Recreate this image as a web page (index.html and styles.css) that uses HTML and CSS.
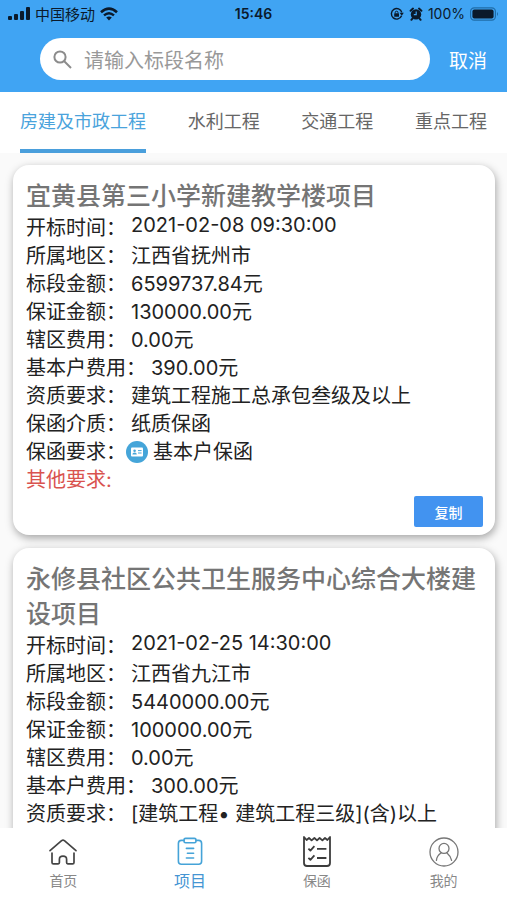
FILE: index.html
```html
<!DOCTYPE html>
<html lang="zh-CN">
<head>
    <meta charset="UTF-8">
    <title>项目</title>
    <meta name="viewport" content="width=device-width, initial-scale=1.0">
    <link rel="stylesheet" href="styles.css">
</head>
<body>
    <header class="header">
        <div class="status-bar">
            <div class="status-left">
                <svg width="22" height="14" viewBox="0 0 22 14">
                    <rect x="0" y="9" width="4" height="4" rx="1"/>
                    <rect x="6" y="7" width="4" height="6" rx="1"/>
                    <rect x="12" y="4" width="4" height="9" rx="1"/>
                    <rect x="18" y="0" width="4" height="13" rx="1"/>
                </svg>
                <span class="carrier">中国移动</span>
                <svg width="18" height="14" viewBox="0 0 18 14">
                    <path d="M1 5.2Q9-2 17 5.2" fill="none" stroke="currentColor" stroke-width="2.6"/>
                    <path d="M4 8.4Q9 4 14 8.4" fill="none" stroke="currentColor" stroke-width="2.4"/>
                    <path d="M6.2 10.6Q9 8.2 11.8 10.6L9 13.6z"/>
                </svg>
            </div>
            <span class="time">15:46</span>
            <div class="status-right">
                <svg width="14" height="14" viewBox="0 0 14 14">
                    <path d="M11.6 8.8A5.3 5.3 0 1 1 11.8 5.4" fill="none" stroke="currentColor" stroke-width="1.4"/>
                    <path d="M9.6 5.8h4.2l-2 3z"/>
                    <rect x="4.2" y="6.2" width="4.8" height="3.6" rx=".6"/>
                    <path d="M5.2 6.4V5.6a1.4 1.4 0 0 1 2.8 0v.8" fill="none" stroke="currentColor"/>
                </svg>
                <svg width="14" height="14" viewBox="0 0 14 14">
                    <circle cx="7" cy="7.4" r="5.2"/>
                    <path d="M1.6 3.8 4 1.6M12.4 3.8 10 1.6M3.6 11.4l-1.2 1.4M10.4 11.4l1.2 1.4" stroke="currentColor" stroke-width="2" stroke-linecap="round"/>
                    <path d="M7.2 4.4v3.2H4.8" fill="none" stroke="#40a4f3" stroke-width="1.2"/>
                </svg>
                <span>100%</span>
                <svg width="29" height="14" viewBox="0 0 29 14">
                    <rect x=".6" y=".8" width="24.8" height="12.4" rx="3.6" fill="none" stroke="#1f6ca8" stroke-width="1.2"/>
                    <rect x="2.4" y="2.6" width="21.2" height="8.8" rx="2"/>
                    <path d="M27 5q2 2 0 4z" fill="#1f6ca8"/>
                </svg>
            </div>
        </div>
        <form class="search-row">
            <label class="search-box" for="keyword">
                <svg width="19" height="19" viewBox="0 0 19 19" fill="none" stroke="#8c8c8c" stroke-width="2">
                    <circle cx="7" cy="7" r="5.6"/>
                    <path d="M11 11l7 7"/>
                </svg>
                <input type="text" id="keyword" placeholder="请输入标段名称" aria-label="标段名称">
            </label>
            <button type="button" class="cancel">取消</button>
        </form>
    </header>

    <nav class="tabs">
        <a href="#" class="tab active">房建及市政工程</a>
        <a href="#" class="tab">水利工程</a>
        <a href="#" class="tab">交通工程</a>
        <a href="#" class="tab">重点工程</a>
    </nav>

    <main class="list">
        <article class="card">
            <h2>宜黄县第三小学新建教学楼项目</h2>
            <dl>
                <div class="row"><dt>开标时间：</dt><dd class="date">2021-02-08 09:30:00</dd></div>
                <div class="row"><dt>所属地区：</dt><dd>江西省抚州市</dd></div>
                <div class="row"><dt>标段金额：</dt><dd>6599737.84元</dd></div>
                <div class="row"><dt>保证金额：</dt><dd>130000.00元</dd></div>
                <div class="row"><dt>辖区费用：</dt><dd>0.00元</dd></div>
                <div class="row"><dt>基本户费用：</dt><dd>390.00元</dd></div>
                <div class="row"><dt>资质要求：</dt><dd>建筑工程施工总承包叁级及以上</dd></div>
                <div class="row"><dt>保函介质：</dt><dd>纸质保函</dd></div>
                <div class="row with-icon">
                    <dt>保函要求：</dt>
                    <dd>
                        <svg width="22" height="22" viewBox="0 0 22 22">
                            <circle cx="11" cy="11" r="11" fill="#45a5d9"/>
                            <rect x="5" y="6.6" width="12" height="9" rx="1" fill="#fff"/>
                            <circle cx="8.6" cy="9.8" r="1.3" fill="#45a5d9"/>
                            <path d="M6.4 13.6q0-2 2.2-2t2.2 2z" fill="#45a5d9"/>
                            <path d="M12 9.6h3.6M12 12h3.6" stroke="#45a5d9"/>
                        </svg>
                        基本户保函
                    </dd>
                </div>
                <div class="row other"><dt>其他要求:</dt><dd></dd></div>
            </dl>
            <div class="actions">
                <button type="button" class="copy">复制</button>
            </div>
        </article>

        <article class="card">
            <h2>永修县社区公共卫生服务中心综合大楼建设项目</h2>
            <dl>
                <div class="row"><dt>开标时间：</dt><dd class="date">2021-02-25 14:30:00</dd></div>
                <div class="row"><dt>所属地区：</dt><dd>江西省九江市</dd></div>
                <div class="row"><dt>标段金额：</dt><dd>5440000.00元</dd></div>
                <div class="row"><dt>保证金额：</dt><dd>100000.00元</dd></div>
                <div class="row"><dt>辖区费用：</dt><dd>0.00元</dd></div>
                <div class="row"><dt>基本户费用：</dt><dd>300.00元</dd></div>
                <div class="row"><dt>资质要求：</dt><dd>[建筑工程• 建筑工程三级](含)以上</dd></div>
            </dl>
        </article>
    </main>

    <nav class="tabbar">
        <a href="#" class="tabbar-item">
            <svg width="30" height="32" viewBox="0 0 30 32" fill="none" stroke="#444" stroke-width="1.7" stroke-linecap="round" stroke-linejoin="round">
                <path d="M2 14.6 13.6 4.6q1.4-1 2.8 0L28 14.6"/>
                <path d="M4 17v9.4q0 1.4 1.4 1.4h4.8q1.2 0 1.2-1.2v-3.4q0-3 3.6-3t3.6 3v3.4q0 1.2 1.2 1.2h4.8q1.4 0 1.4-1.4V17"/>
            </svg>
            <span>首页</span>
        </a>
        <a href="#" class="tabbar-item active">
            <svg width="30" height="32" viewBox="0 0 30 32" fill="none" stroke="#45a3d8" stroke-width="1.6" stroke-linecap="round" stroke-linejoin="round">
                <path d="M9 4.4H6.4q-3 0-3 3v17.8q0 3 3 3h17.2q3 0 3-3V7.4q0-3-3-3H21"/>
                <rect x="9" y="2.4" width="12" height="4.4" rx="1.6"/>
                <path d="M11.4 12.4h7.2M12.4 17.2h6.2M11.4 22h7.2"/>
            </svg>
            <span>项目</span>
        </a>
        <a href="#" class="tabbar-item">
            <svg width="30" height="32" viewBox="0 0 30 32" fill="none" stroke="#3c3c3c" stroke-width="1.8" stroke-linejoin="round">
                <path d="M2 1v26q0 3 3 3h20q3 0 3-3V1l-2.6 3L23 2l-2.6 2.4L17.6 2 15 4.4 12.4 2 9.6 4.4 7 2 4.6 4z"/>
                <path d="M6.4 12.6l2 2 4-4.4M6.4 21.8l2 2 4-4.4M15 12.8h9.4M15 22h9.4"/>
            </svg>
            <span>保函</span>
        </a>
        <a href="#" class="tabbar-item">
            <svg width="30" height="32" viewBox="0 0 30 32" fill="none" stroke="#777" stroke-width="1.3" stroke-linecap="round">
                <circle cx="15" cy="16" r="14"/>
                <circle cx="15" cy="12.4" r="5"/>
                <path d="M7.4 24.4q.4-4.6 4.6-7.4M22.6 24.4q-1-4.4-4.6-7.4"/>
            </svg>
            <span>我的</span>
        </a>
    </nav>
</body>
</html>
```

FILE: styles.css
```css
* {
    box-sizing: border-box;
}
body {
    display: flex;
    flex-direction: column;
    height: 100vh;
    margin: 0;
    overflow: hidden;
    background: #fafafa;
    color: #222;
    font-family: Inter, "Noto Sans CJK SC", sans-serif;
}
a {
    text-decoration: none;
}
svg {
    flex: none;
}
button, input {
    padding: 0;
    border: 0;
    font-family: inherit;
}

/* header */
.header {
    flex: none;
    background: #40a4f3;
}
.status-bar {
    display: grid;
    grid-template-columns: 1fr auto 1fr;
    align-items: center;
    height: 27px;
    padding: 0 8px;
    color: #0b1a2b;
    font-size: 14px;
}
.status-bar svg {
    fill: currentColor;
}
.status-left, .status-right {
    display: flex;
    align-items: center;
    gap: 5px;
}
.status-right {
    justify-content: flex-end;
}
.carrier {
    font-size: 15px;
}
.time {
    font-weight: 600;
}
.search-row {
    display: flex;
    align-items: center;
    padding: 11px 20px 12px 40px;
    gap: 19px;
}
.search-box {
    display: flex;
    flex: 1;
    align-items: center;
    gap: 12px;
    height: 42px;
    padding: 0 13px;
    background: #fff;
    border-radius: 21px;
}
.search-box input {
    flex: 1;
    min-width: 0;
    padding-top: 3px;
    background: none;
    outline: none;
    font-size: 20px;
}
.search-box input::placeholder {
    color: #999;
}
.cancel {
    background: none;
    color: #fff;
    font-size: 19px;
}

/* category tabs */
.tabs {
    display: flex;
    flex: none;
    justify-content: space-between;
    height: 61px;
    padding: 0 20px;
    background: #fff;
}
.tab {
    padding-top: 3px;
    border-bottom: 4px solid transparent;
    color: #666;
    font-size: 18px;
    line-height: 54px;
}
.tab.active {
    border-color: #4a9fdc;
    color: #4aa3dc;
}

/* project list */
.list {
    flex: 1;
    min-height: 0;
    padding: 12px 12px 0 13px;
    overflow: hidden;
}
.card {
    margin-bottom: 13px;
    padding: 14px 12px 8px 13px;
    background: #fff;
    border-radius: 16px;
    box-shadow: 1px 3px 8px rgba(0,0,0,0.35);
}
.card:last-child {
    padding-bottom: 40px;
}
.card h2 {
    margin: 0;
    color: #757575;
    font-size: 25px;
    font-weight: 500;
    line-height: 35px;
}
.card dl {
    margin: 0;
}
.row {
    display: flex;
    gap: 5px;
    font-size: 20px;
    line-height: 28px;
}
.row dd {
    margin: 0;
}
.row .date {
    line-height: 22px;
}
.row.with-icon {
    gap: 0;
}
.with-icon dd {
    display: flex;
    align-items: center;
    gap: 5px;
}
.row.other {
    color: #d9534f;
}
.actions {
    display: flex;
    justify-content: flex-end;
    padding-top: 2px;
}
.copy {
    width: 69px;
    height: 31px;
    background: #4293f0;
    border-radius: 2px;
    color: #fff;
    font-size: 14px;
    font-weight: 500;
}

/* bottom bar */
.tabbar {
    display: flex;
    flex: none;
    height: 72px;
    padding-top: 8px;
    background: #fff;
}
.tabbar-item {
    display: flex;
    flex: 1;
    flex-direction: column;
    align-items: center;
    gap: 2px;
    color: #888;
    font-size: 14px;
    line-height: 22px;
}
.tabbar-item.active {
    color: #4595d3;
    font-size: 16px;
}
```
